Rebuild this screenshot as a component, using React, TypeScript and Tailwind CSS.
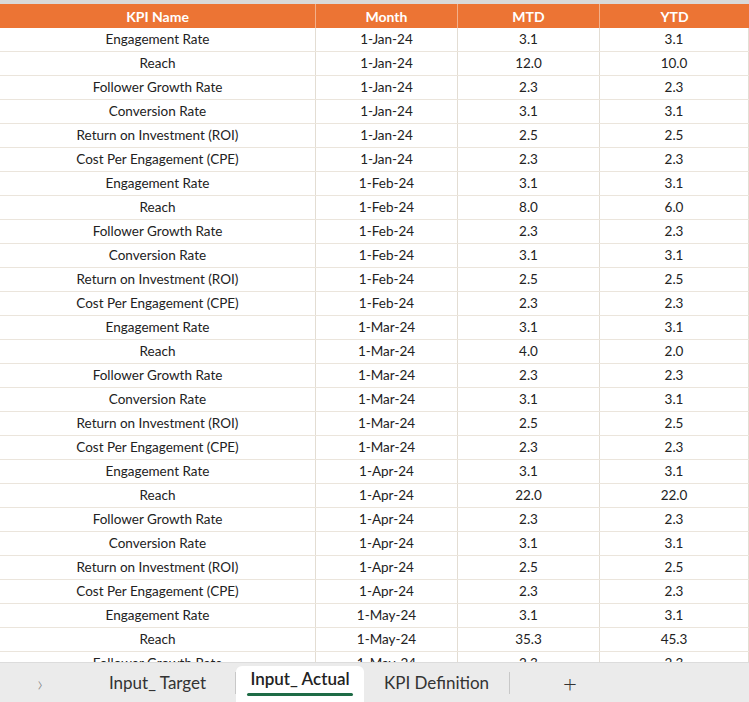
const kpis = [
  'Engagement Rate',
  'Reach',
  'Follower Growth Rate',
  'Conversion Rate',
  'Return on Investment (ROI)',
  'Cost Per Engagement (CPE)',
];
const months = ['1-Jan-24', '1-Feb-24', '1-Mar-24', '1-Apr-24', '1-May-24'];
const reach: [string, string][] = [
  ['12.0', '10.0'],
  ['8.0', '6.0'],
  ['4.0', '2.0'],
  ['22.0', '22.0'],
  ['35.3', '45.3'],
];
const base = ['3.1', '', '2.3', '3.1', '2.5', '2.3'];

const rows = months.flatMap((m, mi) =>
  kpis.map((k, ki) => {
    const mtd = ki === 1 ? reach[mi][0] : base[ki];
    const ytd = ki === 1 ? reach[mi][1] : base[ki];
    return { k, m, mtd, ytd };
  }),
);

const cell = 'flex items-center justify-center border-r border-[#e3ddd3]';

export default function App() {
  return (
    <div
      className="w-[749px] h-[702px] overflow-hidden flex flex-col bg-white text-[13.5px] text-[#222]"
      style={{ fontFamily: 'Lato, "Open Sans", sans-serif' }}
    >
      <div className="flex-1 overflow-hidden">
        <div className="h-[4px] bg-[#d9d9d9]" />
        <div className="grid grid-cols-[316px_142px_142px_149px] h-[24px] bg-[#ec7434] text-white font-bold text-[14px]">
          <div className="flex items-center justify-center border-r border-[#f3b08a]">KPI Name</div>
          <div className="flex items-center justify-center border-r border-[#f3b08a]">Month</div>
          <div className="flex items-center justify-center border-r border-[#f3b08a]">MTD</div>
          <div className="flex items-center justify-center">YTD</div>
        </div>
        {rows.map((r, i) => (
          <div key={i} className="grid grid-cols-[316px_142px_142px_149px] h-[24px] border-b border-[#ebe5dc]">
            <div className={cell}>{r.k}</div>
            <div className={cell}>{r.m}</div>
            <div className={cell}>{r.mtd}</div>
            <div className={cell}>{r.ytd}</div>
          </div>
        ))}
      </div>
      <div className="h-[40px] shrink-0 bg-[#ebebeb] flex items-end text-[17px] text-[#333] border-t border-[#dcdcdc]">
        <div className="w-[80px] h-full flex items-center justify-center text-[#888] text-[22px] font-light">›</div>
        <div className="w-[155px] h-full flex items-center justify-center">Input_ Target</div>
        <div className="w-px h-[22px] self-center bg-[#c8c8c8]" />
        <div className="w-[128px] h-[36px] bg-white rounded-t-md flex flex-col items-center justify-center font-semibold text-[#222]">
          <span className="mt-[-6px]">Input_ Actual</span>
          <span className="w-[106px] h-[3px] bg-[#1e6b46] rounded mt-[2px]" />
        </div>
        <div className="w-[145px] h-full flex items-center justify-center">KPI Definition</div>
        <div className="w-px h-[22px] self-center bg-[#c8c8c8]" />
        <div className="w-[120px] h-full flex items-center justify-center text-[24px] font-light">+</div>
      </div>
    </div>
  );
}
